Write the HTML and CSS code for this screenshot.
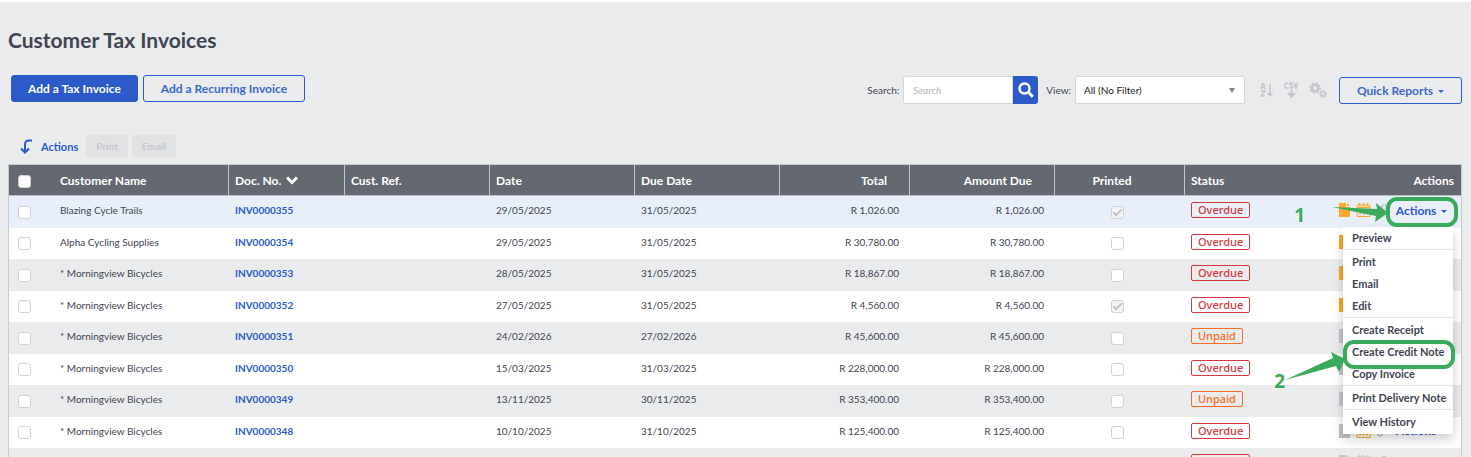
FILE: index.html
```html
<!DOCTYPE html>
<html lang="en">

<head>
    <meta charset="utf-8">
    <title>Customer Tax Invoices</title>
    <link rel="stylesheet" href="styles.css">
</head>

<body>
    <!-- shared icons -->
    <svg class="sprite" aria-hidden="true">
        <symbol id="icon-note" viewBox="0 0 11 14">
            <path d="M0 0h7v4h4v10H0z" />
            <path d="M8 0l3 3H8z" />
        </symbol>
        <symbol id="icon-calendar" viewBox="0 0 15 14">
            <path d="M1 2h13v11.5H1z" fill="none" stroke="currentColor" />
            <path d="M1 4.5h13M3.5 0v3M7.5 0v3M11.5 0v3" stroke="currentColor" stroke-width="1.5" />
            <path d="M3 7h2M6.5 7h2M10 7h2M3 10.5h2M6.5 10.5h2M10 10.5h2" stroke="currentColor" stroke-width="2" />
        </symbol>
        <symbol id="icon-clip" viewBox="0 0 10 14">
            <path d="M2 7l3.5-4.5a2 2 0 0 1 3.5 2.5l-4 6a2 2 0 0 1-3.5-2L6 4" fill="none" stroke="currentColor" stroke-width="1.3" />
        </symbol>
    </svg>

    <main class="page">
        <h1>Customer Tax Invoices</h1>

        <div class="toolbar">
            <div class="toolbar-left">
                <button type="button" class="btn btn-primary">Add a Tax Invoice</button>
                <button type="button" class="btn btn-outline">Add a Recurring Invoice</button>
            </div>
            <form class="toolbar-right">
                <label for="search">Search:</label>
                <div class="search-box">
                    <input type="text" id="search" placeholder="Search">
                    <button type="button" aria-label="Search">
                        <svg width="16" height="16" viewBox="0 0 16 16" fill="none" stroke="#fff">
                            <circle cx="6.5" cy="6.5" r="5" stroke-width="2.5" />
                            <path d="M10.3 10.3l4.5 4.5" stroke-width="3" />
                        </svg>
                    </button>
                </div>
                <label for="view">View:</label>
                <div class="select-box">
                    <select id="view">
                        <option>All (No Filter)</option>
                    </select>
                </div>
                <div class="tools">
                    <svg width="14" height="14" viewBox="0 0 14 14" fill="none" stroke="currentColor" stroke-width="1.5">
                        <path d="M1 6l1.5-5h1L5 6M1.5 4.5h3M1 8h4L1 13h4" />
                        <path d="M10 1v11M7.5 10l2.5 2.5 2.5-2.5" />
                    </svg>
                    <svg width="15" height="16" viewBox="0 0 15 16" fill="none" stroke="currentColor" stroke-width="1.5">
                        <path d="M4.5 1.5C3 .3 1 1 1 3.500S3 6.500 4.500 5.500M9 1.500C7.500.5 6 1 6 2.300s3 1.200 3 2.500S7 6.500 5.800 5.500M10.300 1l1.700 5.200L13.700 1" />
                        <path d="M7.5 7.500v7M4 11l3.500 3.700L11 11" stroke-width="2" />
                    </svg>
                    <svg width="18" height="16" viewBox="0 0 18 16" fill="none" stroke="currentColor">
                        <circle cx="6" cy="6" r="3.2" stroke-width="2.5" />
                        <circle cx="6" cy="6" r="5" stroke-width="1.6" stroke-dasharray="2 1.93" />
                        <circle cx="14" cy="12" r="2.2" stroke-width="1.6" />
                        <circle cx="14" cy="12" r="3.3" stroke-width="1.2" stroke-dasharray="1.4 1.19" />
                    </svg>
                </div>
                <button type="button" class="btn btn-outline reports">Quick Reports <span class="caret"></span></button>
            </form>
        </div>

        <div class="bulk">
            <svg width="13" height="15" viewBox="0 0 13 15" fill="none" stroke="#2c5ac8" stroke-width="2">
                <path d="M12 1.5H9c-2.5 0-4 1-4 4V13M1 9.5l4 4 4-4" />
            </svg>
            <span class="bulk-title">Actions</span>
            <button type="button" disabled>Print</button>
            <button type="button" disabled>Email</button>
        </div>

        <table class="invoices">
            <colgroup>
                <col class="col-check">
                <col class="col-name">
                <col class="col-doc">
                <col class="col-date">
                <col class="col-date">
                <col class="col-date">
                <col class="col-total">
                <col class="col-date">
                <col class="col-total">
                <col class="col-actions">
            </colgroup>
            <thead>
                <tr>
                    <th><input type="checkbox" aria-label="Select all"></th>
                    <th>Customer Name</th>
                    <th class="split">Doc. No. <svg class="sort" width="12" height="9" viewBox="0 0 12 9" fill="none" stroke="#fff" stroke-width="3"><path d="M1 1.5l5 5 5-5" /></svg></th>
                    <th class="split">Cust. Ref.</th>
                    <th class="split">Date</th>
                    <th class="split">Due Date</th>
                    <th class="split money">Total</th>
                    <th class="split money">Amount Due</th>
                    <th class="split center">Printed</th>
                    <th class="split">
                        <div class="status-head"><span>Status</span><span>Actions</span></div>
                    </th>
                </tr>
            </thead>
            <tbody id="rows"></tbody>
        </table>
    </main>

    <script src="script.js"></script>
</body>

</html>
```
FILE: styles.css
```css
*,
*::before,
*::after {
    box-sizing: border-box;
}

body {
    margin: 0;
    height: 100vh;
    overflow: hidden;
    border-top: 2px solid #fff;
    background-color: #eaebed;
    color: #414552;
    font-family: Lato, "Liberation Sans", sans-serif;
    font-size: 10px;
}

button,
input,
select {
    font-family: inherit;
}

.sprite {
    display: none;
}

.page {
    padding: 24px 9px 0 8px;
}

h1 {
    margin: 0;
    font-size: 21px;
    font-weight: bold;
    line-height: 28px;
}

/* toolbar */
.toolbar {
    display: flex;
    justify-content: space-between;
    align-items: flex-start;
    padding: 21px 0 0 3px;
}

.toolbar-left {
    display: flex;
    gap: 5px;
}

.btn {
    height: 27px;
    padding: 0 16px;
    border: 1px solid #2c5ac8;
    border-radius: 3px;
    font-size: 12px;
    font-weight: bold;
    white-space: nowrap;
}

.btn-primary {
    background-color: #2c5ac8;
    color: #fff;
}

.btn-outline {
    padding: 0 17px;
    background-color: transparent;
    color: #3d68cc;
}

.toolbar-right {
    display: flex;
    align-items: center;
    padding-top: 1px;
}

.search-box {
    display: flex;
    margin: 0 8px 0 4px;
}

.search-box input {
    width: 110px;
    height: 28px;
    padding: 0 9px;
    border: 1px solid #d3d5d9;
    border-radius: 3px 0 0 3px;
    font-size: 10px;
}

.search-box input::placeholder {
    color: #b4b6bb;
    font-style: italic;
}

.search-box button {
    display: flex;
    align-items: center;
    justify-content: center;
    width: 25px;
    height: 28px;
    padding: 0;
    border: 0;
    border-radius: 0 3px 3px 0;
    background-color: #2c5ac8;
}

.select-box {
    position: relative;
    margin-left: 4px;
}

.select-box select {
    width: 170px;
    height: 28px;
    padding: 0 8px;
    appearance: none;
    border: 1px solid #d3d5d9;
    border-radius: 3px;
    background-color: #fff;
    color: #222;
    font-size: 10px;
}

.select-box::after {
    content: "";
    position: absolute;
    top: 12px;
    right: 10px;
    border: 3px solid transparent;
    border-top: 5px solid #888;
    border-bottom: 0;
}

.tools {
    display: flex;
    align-items: center;
    gap: 10px;
    margin: 0 12px 0 15px;
    color: #c3c5c9;
}

.reports {
    width: 123px;
    padding: 0;
}

.caret {
    display: inline-block;
    margin-left: 2px;
    border: 3px solid transparent;
    border-top-color: currentColor;
    border-bottom: 0;
    vertical-align: middle;
}

/* bulk actions above the table */
.bulk {
    display: flex;
    align-items: center;
    height: 22px;
    margin: 31px 0 7px 12px;
}

.bulk-title {
    margin: 0 8px 0 8px;
    color: #2c5ac8;
    font-size: 11px;
    font-weight: bold;
}

.bulk button {
    height: 22px;
    margin-right: 4px;
    padding: 0 10px;
    border: 0;
    border-radius: 3px;
    background-color: #e1e2e4;
    color: #c6c8cc;
    font-size: 10px;
    font-weight: bold;
}

/* invoice table */
.invoices {
    width: 100%;
    table-layout: fixed;
    border-spacing: 0;
    border: 1px solid #c9cbcf;
}

.col-check {
    width: 44px;
}

.col-name {
    width: 175px;
}

.col-doc {
    width: 116px;
}

.col-date {
    width: 145px;
}

.col-total {
    width: 130px;
}

.invoices th {
    height: 31px;
    padding: 0 7px;
    border-bottom: 1px solid #b9bcc4;
    background-color: #646870;
    color: #fff;
    font-size: 12px;
    font-weight: bold;
    text-align: left;
    white-space: nowrap;
}

.invoices th.split {
    background-image: linear-gradient(#c3c5c9, #c3c5c9);
    background-repeat: no-repeat;
    background-size: 1px 100%;
}

.invoices th.money {
    padding-right: 22px;
    text-align: right;
}

.sort {
    margin-left: 2px;
}

.invoices td {
    height: 31px;
    padding: 0 7px 4px;
    background-color: #fff;
    white-space: nowrap;
}

.invoices tr:nth-child(odd) td {
    height: 32px;
    background-color: #eaebed;
}

.invoices tr.active td {
    background-color: #e8effb;
}

.invoices th:first-child,
.invoices td:first-child {
    padding-left: 9px;
}

.invoices td.money {
    padding-right: 10px;
    text-align: right;
}

.invoices .center {
    padding-right: 11px;
    text-align: center;
}

.invoices th.center {
    padding-right: 21px;
}

.invoices a {
    color: #2c5ac8;
    font-weight: bold;
    text-decoration: none;
}

input[type="checkbox"] {
    display: inline-block;
    width: 13px;
    height: 13px;
    margin: 0;
    appearance: none;
    border: 1px solid #d0d2d6;
    border-radius: 3px;
    background-color: #fff;
    vertical-align: middle;
}

td input[type="checkbox"] {
    margin-top: 4px;
}

input[type="checkbox"]:checked {
    background-color: #f3f4f5;
}

input[type="checkbox"]:checked::after {
    content: "";
    display: block;
    width: 5px;
    height: 9px;
    margin: 0 auto;
    border: solid #c3c5c9;
    border-width: 0 2px 2px 0;
    transform: rotate(45deg);
}

.status-head,
.status-cell {
    display: flex;
    align-items: center;
    justify-content: space-between;
}

.badge {
    height: 16px;
    padding: 0 6px;
    border: 1px solid currentColor;
    border-radius: 2px;
    font-family: "Noto Sans", sans-serif;
    font-size: 11px;
    font-weight: 500;
    line-height: 14px;
}

.overdue {
    color: #d5393f;
}

.unpaid {
    color: #fb6b28;
}

.row-tools {
    position: relative;
    display: flex;
    align-items: center;
    gap: 6px;
    color: #c3c5c9;
    fill: currentColor;
}

.row-tools .on {
    color: #fba92b;
}

.row-tools .menu-button {
    width: 61px;
    padding: 0 4px 0 0;
    border: 0;
    background: none;
    color: #2c5ac8;
    font-size: 12px;
    font-weight: bold;
    text-align: center;
}

/* open actions menu */
.menu {
    position: absolute;
    z-index: 1;
    top: 24px;
    right: 1px;
    width: 110px;
    margin: 0;
    padding: 0 0 1px;
    background-color: #fff;
    box-shadow: 0 5px 10px rgba(0, 0, 0, 0.2);
    list-style: none;
}

.menu button {
    display: block;
    width: 100%;
    height: 22px;
    padding: 0 9px;
    border: 0;
    background: none;
    color: #414552;
    font-size: 11px;
    font-weight: bold;
    text-align: left;
    white-space: nowrap;
}

.menu .line {
    padding-top: 1px;
    border-top: 1px solid #e1e2e4;
}

/* numbered steps */
.ring {
    position: absolute;
    z-index: 2;
    border: 4px solid #3aaa5c;
    border-radius: 11px;
    pointer-events: none;
}

.ring-actions {
    top: -6px;
    right: -4px;
    width: 72px;
    height: 30px;
}

.ring-credit {
    top: 137px;
    right: -1px;
    width: 112px;
    height: 29px;
}

.step {
    position: absolute;
    z-index: 2;
    color: #3aaa5c;
    font-family: "Noto Sans", sans-serif;
    font-size: 19px;
    font-weight: bold;
    line-height: 20px;
}

.step-one {
    top: 2px;
    right: 149px;
}

.step-two {
    top: 168px;
    right: 169px;
}

.arrow {
    position: absolute;
    z-index: 2;
    fill: #3aaa5c;
}

.arrow-one {
    top: 0;
    right: 66px;
}

.arrow-two {
    top: 149px;
    right: 109px;
}
```
FILE: script.js
```js
var invoices = [
    ["Blazing Cycle Trails", "INV0000355", "29/05/2025", "31/05/2025", "R 1,026.00", true, "Overdue", true],
    ["Alpha Cycling Supplies", "INV0000354", "29/05/2025", "31/05/2025", "R 30,780.00", false, "Overdue", true],
    ["* Morningview Bicycles", "INV0000353", "28/05/2025", "31/05/2025", "R 18,867.00", false, "Overdue", true],
    ["* Morningview Bicycles", "INV0000352", "27/05/2025", "31/05/2025", "R 4,560.00", true, "Overdue", true],
    ["* Morningview Bicycles", "INV0000351", "24/02/2026", "27/02/2026", "R 45,600.00", false, "Unpaid", false],
    ["* Morningview Bicycles", "INV0000350", "15/03/2025", "31/03/2025", "R 228,000.00", false, "Overdue", false],
    ["* Morningview Bicycles", "INV0000349", "13/11/2025", "30/11/2025", "R 353,400.00", false, "Unpaid", false],
    ["* Morningview Bicycles", "INV0000348", "10/10/2025", "31/10/2025", "R 125,400.00", false, "Overdue", false],
    ["", "", "", "", "", false, "Overdue", false]
];

// true puts a separator above the item
var menuItems = [
    ["Preview", false], ["Print", true], ["Email", false], ["Edit", false],
    ["Create Receipt", true], ["Create Credit Note", false], ["Copy Invoice", false],
    ["Print Delivery Note", true], ["View History", true]
];

function menuHtml() {
    var items = menuItems.map(function (item) {
        return `<li class="${item[1] ? "line" : ""}"><button type="button">${item[0]}</button></li>`;
    }).join("");

    return `<ul class="menu">${items}</ul>
        <span class="ring ring-actions"></span>
        <span class="ring ring-credit"></span>
        <span class="step step-one">1</span>
        <svg class="arrow arrow-one" width="56" height="20" viewBox="0 0 56 20"><path d="M0 4l45 2-1-6 12 10-13 9 1-6z"/></svg>
        <svg class="arrow arrow-two" width="60" height="29" viewBox="0 0 60 29"><path d="M0 28L48 6 46 0l14 7-6 13-3-6z"/></svg>
        <span class="step step-two">2</span>`;
}

document.getElementById("rows").innerHTML = invoices.map(function (inv, i) {
    var calendar = inv[7] || i === 7 ? "on" : "";
    return `<tr class="${i === 0 ? "active" : ""}">
        <td><input type="checkbox" aria-label="Select invoice"></td>
        <td>${inv[0]}</td>
        <td><a href="#">${inv[1]}</a></td>
        <td></td>
        <td>${inv[2]}</td>
        <td>${inv[3]}</td>
        <td class="money">${inv[4]}</td>
        <td class="money">${inv[4]}</td>
        <td class="center"><input type="checkbox" aria-label="Printed" disabled ${inv[5] ? "checked" : ""}></td>
        <td>
            <div class="status-cell">
                <span class="badge ${inv[6].toLowerCase()}">${inv[6]}</span>
                <div class="row-tools">
                    <svg class="${inv[7] ? "on" : ""}" width="11" height="14"><use href="#icon-note"/></svg>
                    <svg class="${calendar}" width="15" height="14"><use href="#icon-calendar"/></svg>
                    <svg width="10" height="14"><use href="#icon-clip"/></svg>
                    <button type="button" class="menu-button">Actions <span class="caret"></span></button>
                    ${i === 0 ? menuHtml() : ""}
                </div>
            </div>
        </td>
    </tr>`;
}).join("");
```
